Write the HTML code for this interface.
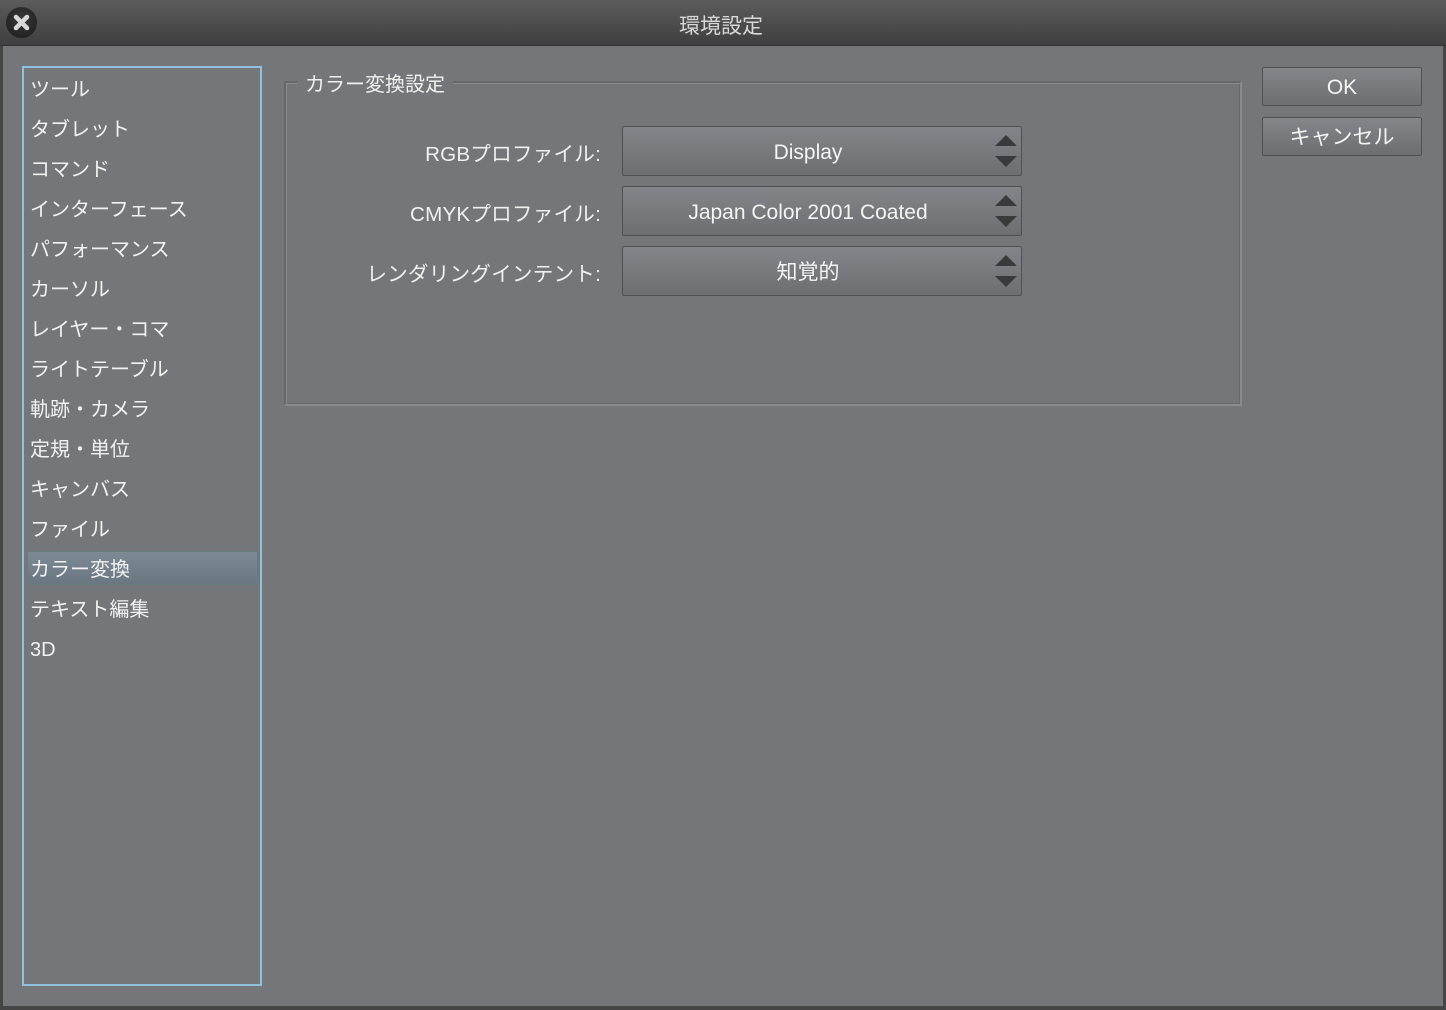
<!DOCTYPE html>
<html><head><meta charset="utf-8"><style>
*{margin:0;padding:0;box-sizing:border-box}
body{width:1446px;height:1010px;overflow:hidden;background:#454545;font-family:"Liberation Sans","Noto Sans CJK JP",sans-serif;color:#f0f0f0;position:relative}
.title{position:absolute;left:0;top:0;width:1446px;height:46px;background:linear-gradient(#5c5c5c,#3f3f3f);border-bottom:1px solid #333}
.title span{position:absolute;left:0;right:4px;top:10px;text-align:center;font-size:21px;color:#d8d8d8}
.close{position:absolute;left:6px;top:7px;width:31px;height:31px;border-radius:50%;background:radial-gradient(circle at 50% 40%,#3a3a3a,#1a1a1a);}
.main{position:absolute;left:3px;top:46px;width:1440px;height:960px;background:#75767a}
.list{position:absolute;left:22px;top:66px;width:240px;height:920px;border:2px solid #8fc0dc}
.item{position:absolute;left:8px;font-size:20px;color:#f2f2f2;line-height:24px}
.sel{position:absolute;left:27px;top:551px;width:231px;height:34px;background:linear-gradient(#7d8a95,#6a7782);border:1px solid #6c7a85;border-radius:2px}
.group{position:absolute;left:284px;top:81px;width:958px;height:325px;border:2px solid;border-color:#67686b #8a8b8e #8a8b8e #67686b;box-shadow:inset 1px 1px 0 #8a8b8e,inset -1px -1px 0 #67686b}
.gt{position:absolute;left:297px;top:68px;padding:0 8px;background:#75767a;font-size:20px;color:#f0f0f0}
.lbl{position:absolute;right:845px;font-size:20.6px;color:#f0f0f0;letter-spacing:0.2px}
.dd{position:absolute;left:622px;width:400px;height:50px;border:1px solid #505155;border-radius:2px;background:linear-gradient(#84858a,#6d6e72);font-size:21px;text-align:center;line-height:52px;color:#f4f4f4}
.dd:before{content:"";position:absolute;right:4px;top:8px;border:11px solid transparent;border-top:0;border-bottom:11px solid #3a3a3c}
.dd:after{content:"";position:absolute;right:4px;bottom:8px;border:11px solid transparent;border-bottom:0;border-top:11px solid #3a3a3c}
.dd span{display:inline-block;margin-right:28px}
.btn{position:absolute;left:1262px;width:160px;height:39px;border:1px solid #505155;border-radius:2px;background:linear-gradient(#85868b,#6d6e72);text-align:center;line-height:40px;font-size:21px;color:#f4f4f4}
</style></head><body>
<div class="title"><div class="close"><svg width="31" height="31" viewBox="0 0 31 31"><path d="M10 10L21 21M21 10L10 21" stroke="#d8d8d8" stroke-width="4.5" stroke-linecap="round"/></svg></div><span>環境設定</span></div>
<div class="main"></div>
<div class="list"></div>
<div class="sel"></div>
<div class="item" style="left:30px;top:78px">ツール</div>
<div class="item" style="left:30px;top:118px">タブレット</div>
<div class="item" style="left:30px;top:158px">コマンド</div>
<div class="item" style="left:30px;top:198px">インターフェース</div>
<div class="item" style="left:30px;top:238px">パフォーマンス</div>
<div class="item" style="left:30px;top:278px">カーソル</div>
<div class="item" style="left:30px;top:318px">レイヤー・コマ</div>
<div class="item" style="left:30px;top:358px">ライトテーブル</div>
<div class="item" style="left:30px;top:398px">軌跡・カメラ</div>
<div class="item" style="left:30px;top:438px">定規・単位</div>
<div class="item" style="left:30px;top:478px">キャンバス</div>
<div class="item" style="left:30px;top:518px">ファイル</div>
<div class="item" style="left:30px;top:558px">カラー変換</div>
<div class="item" style="left:30px;top:598px">テキスト編集</div>
<div class="item" style="left:30px;top:638px">3D</div>
<div class="group"></div>
<div class="gt">カラー変換設定</div>
<div class="lbl" style="top:137px">RGBプロファイル:</div>
<div class="lbl" style="top:197px">CMYKプロファイル:</div>
<div class="lbl" style="top:257px">レンダリングインテント:</div>
<div class="dd" style="top:126px"><span>Display</span></div>
<div class="dd" style="top:186px"><span>Japan Color 2001 Coated</span></div>
<div class="dd" style="top:246px"><span>知覚的</span></div>
<div class="btn" style="top:67px">OK</div>
<div class="btn" style="top:117px">キャンセル</div>
</body></html>
